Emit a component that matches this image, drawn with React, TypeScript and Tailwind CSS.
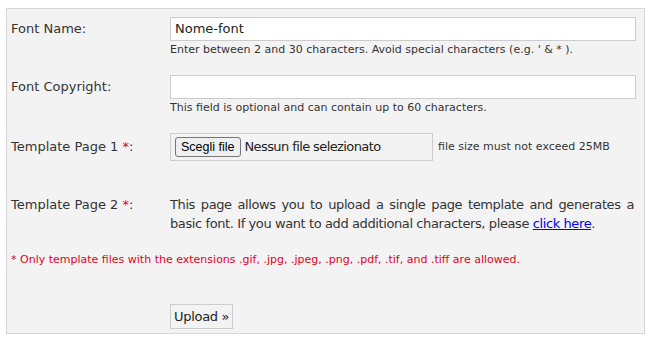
export default function App() {
  return (
    <div className="bg-white w-[650px] h-[342px] pt-[8px] pl-[6px] font-['DejaVu_Sans',Verdana,sans-serif] text-[#333]">
      <div className="w-[639px] h-[326px] border border-[#d6d6d6] bg-[#f3f3f3] pl-[4px]">
        {/* Font name */}
        <div className="flex mt-[8px]">
          <div className="w-[159px] h-[24px] flex items-center text-[13px]">Font Name:</div>
          <div>
            <div className="w-[466px] h-[24px] border border-[#ccc] bg-white flex items-center px-[4px] text-[13px] text-[#222]">
              Nome-font
            </div>
            <p className="text-[11px] leading-[14px] mt-[2px]">
              Enter between 2 and 30 characters. Avoid special characters (e.g. ' &amp; * ).
            </p>
          </div>
        </div>

        {/* Font copyright */}
        <div className="flex mt-[18px]">
          <div className="w-[159px] h-[24px] flex items-center text-[13px]">Font Copyright:</div>
          <div>
            <div className="w-[466px] h-[24px] border border-[#ccc] bg-white" />
            <p className="text-[11px] leading-[14px] mt-[2px]">
              This field is optional and can contain up to 60 characters.
            </p>
          </div>
        </div>

        {/* Template page 1 */}
        <div className="flex mt-[18px] items-center">
          <div className="w-[159px] text-[13px]">
            Template Page 1 <span className="text-[#e3001b]">*</span>:
          </div>
          <div className="w-[263px] h-[28px] border border-[#ccc] flex items-center pl-[4px] gap-[4px] text-[13px]">
            <span className="h-[20px] px-[5px] flex items-center border border-[#767676] rounded-[3px] bg-[#efefef] font-['Liberation_Sans',Arial,sans-serif] text-[12.5px] text-black">
              Scegli file
            </span>
            <span className="text-[#222] tracking-[-0.6px]">Nessun file selezionato</span>
          </div>
          <span className="ml-[5px] text-[11px]">file size must not exceed 25MB</span>
        </div>

        {/* Template page 2 */}
        <div className="flex mt-[34px]">
          <div className="w-[159px] text-[13px] leading-[19px]">
            Template Page 2 <span className="text-[#e3001b]">*</span>:
          </div>
          <p className="w-[464px] text-[13px] leading-[19px] text-justify tracking-[-0.4px]">
            This page allows you to upload a single page template and generates a basic font. If you want to add
            additional characters, please{" "}
            <a href="#" className="text-[#0000ee] underline">
              click here
            </a>
            .
          </p>
        </div>

        {/* Note */}
        <p className="mt-[20px] text-[11px] leading-[14px] text-[#e3001b]">
          * Only template files with the extensions .gif, .jpg, .jpeg, .png, .pdf, .tif, and .tiff are allowed.
        </p>

        {/* Upload */}
        <div className="mt-[37px] pl-[159px]">
          <button className="h-[25px] px-[3px] border border-[#ccc] bg-[#f3f3f3] text-[13px] text-[#222] tracking-[-0.3px]">
            Upload »
          </button>
        </div>
      </div>
    </div>
  );
}
